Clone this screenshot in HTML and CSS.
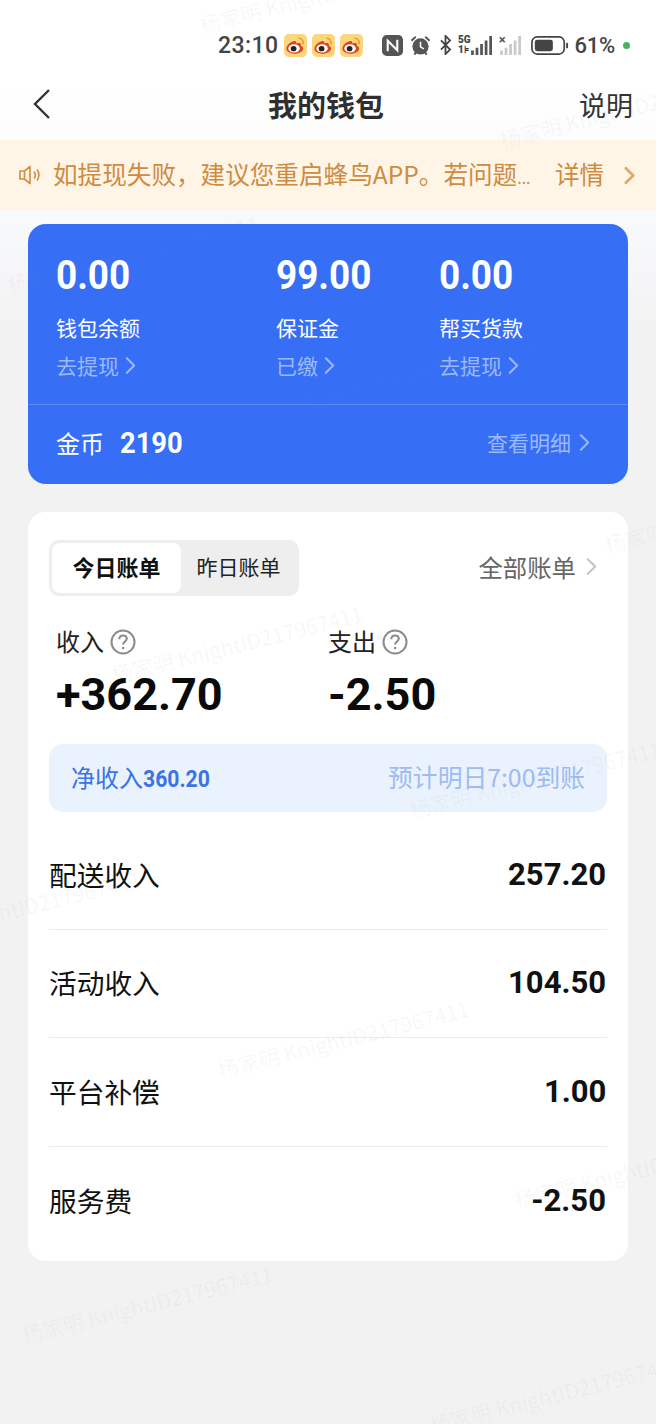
FILE: index.html
```html
<!DOCTYPE html>
<html lang="zh-CN">
<head>
  <meta charset="UTF-8" />
  <meta name="viewport" content="width=device-width, initial-scale=1.0"/>
  <title>我的钱包</title>
  <link rel="stylesheet" href="styles.css">
</head>
<body>
  <svg class="defs" width="0" height="0">
    <symbol id="weibo" viewBox="0 0 24 24">
      <rect width="24" height="24" rx="5" fill="#fbd67c"/>
      <path d="M10 7.500c-4 1-7.500 4.500-7.500 8 0 3 4 5 8.500 5s9-2.500 9-5.500c0-2-2-2.500-2.500-3 .5-1.500 0-3-2.500-2.500l-2 .5c.2-2-1-3.300-3-2.500z" fill="#e2411f"/>
      <ellipse cx="10.500" cy="15" rx="6" ry="4.200" fill="#fff"/>
      <ellipse cx="10" cy="15.300" rx="3" ry="2.800" fill="#222"/>
      <path d="M15 4.500c3.500 0 5.500 2.500 5 6" fill="none" stroke="#ef9a2a" stroke-width="1.600"/>
    </symbol>
    <symbol id="chev" viewBox="0 0 12 20">
      <path d="M2 2l8 8-8 8" fill="none" stroke="currentColor" stroke-linecap="round" stroke-linejoin="round"/>
    </symbol>
    <symbol id="help" viewBox="0 0 26 26">
      <circle cx="13" cy="13" r="11.500" fill="none" stroke="#8a8a8a" stroke-width="2"/>
      <path d="M9.300 10.200c0-2.300 1.700-3.700 3.800-3.700s3.700 1.400 3.700 3.300c0 2.600-3.700 2.800-3.700 5.600" fill="none" stroke="#8a8a8a" stroke-width="2"/>
      <circle cx="13.100" cy="19" r="1.300" fill="#8a8a8a"/>
    </symbol>
    <symbol id="bars" viewBox="0 0 24 22">
      <path d="M0 17h3v5H0zM5 14h3v8H5zM10 10h3v12h-3zM15 6h3v16h-3zM20 1h3v21h-3z"/>
    </symbol>
  </svg>

  <div class="status-bar">
    <span class="clock">23:10</span>
    <svg class="app-icon"><use href="#weibo"/></svg>
    <svg class="app-icon"><use href="#weibo"/></svg>
    <svg class="app-icon"><use href="#weibo"/></svg>
    <svg class="nfc" viewBox="0 0 22 22">
      <rect width="22" height="22" rx="5" fill="#555"/>
      <path d="M6 17V6l10 10V5" fill="none" stroke="#fff" stroke-width="2.200"/>
    </svg>
    <svg class="alarm" viewBox="0 0 22 22">
      <circle cx="11" cy="12" r="8.500" fill="#555"/>
      <path d="M1.500 6L6 1.800M20.500 6L16 1.800M4.500 20.500l2-2.500M17.500 20.500l-2-2.500" stroke="#555" stroke-width="2"/>
      <path d="M11 7v5.500l3.500 2" fill="none" stroke="#fff" stroke-width="1.600"/>
    </svg>
    <svg class="bluetooth" viewBox="0 0 14 22">
      <path d="M2 6l10 10-5 5V1l5 5L2 16" fill="none" stroke="#444" stroke-width="2"/>
    </svg>
    <span class="signal">
      <span class="signal-tag"><b>5G</b><b>1⊧</b></span>
      <svg class="bars"><use href="#bars"/></svg>
    </span>
    <span class="signal muted">
      <span class="signal-x">×</span>
      <svg class="bars"><use href="#bars"/></svg>
    </span>
    <svg class="battery" viewBox="0 0 40 20">
      <rect x="1" y="1" width="34" height="18" rx="5.500" fill="none" stroke="#444" stroke-width="1.800"/>
      <rect x="4" y="4" width="19" height="12" rx="2.500" fill="#444"/>
      <rect x="37" y="7" width="2" height="6" rx="1" fill="#444"/>
    </svg>
    <span class="percent">61%</span>
    <span class="dot"></span>
  </div>

  <div class="nav-bar">
    <svg class="back" viewBox="0 0 18 32"><path d="M16 2L2 16l14 14" fill="none" stroke="#333" stroke-width="2.400"/></svg>
    <h1>我的钱包</h1>
    <span class="nav-link">说明</span>
  </div>

  <div class="notice">
    <svg class="speaker" viewBox="0 0 24 24">
      <path d="M2 8h4.500L12 3.500v17L6.500 16H2zM6.500 8v8" fill="none" stroke="#d2904a" stroke-width="1.700" stroke-linejoin="round"/>
      <path d="M16 8.500c1.500 2 1.500 5 0 7M19 6.500c2.500 3 2.500 8 0 11" fill="none" stroke="#d2904a" stroke-width="1.700"/>
    </svg>
    <span class="notice-text">如提现失败，建议您重启蜂鸟APP。若问题<span class="notice-dots">...</span></span>
    <span class="notice-more">详情</span>
    <svg class="chev notice-chev"><use href="#chev"/></svg>
  </div>

  <div class="content">
    <section class="wallet">
      <div class="wallet-cols">
        <div class="wallet-col">
          <div class="wallet-num">0.00</div>
          <div class="wallet-label">钱包余额</div>
          <div class="wallet-sub">去提现<svg class="chev"><use href="#chev"/></svg></div>
        </div>
        <div class="wallet-col">
          <div class="wallet-num">99.00</div>
          <div class="wallet-label">保证金</div>
          <div class="wallet-sub">已缴<svg class="chev"><use href="#chev"/></svg></div>
        </div>
        <div class="wallet-col">
          <div class="wallet-num">0.00</div>
          <div class="wallet-label">帮买货款</div>
          <div class="wallet-sub">去提现<svg class="chev"><use href="#chev"/></svg></div>
        </div>
      </div>
      <div class="wallet-foot">
        <span class="coin-label">金币</span>
        <span class="coin-num">2190</span>
        <span class="wallet-detail">查看明细<svg class="chev"><use href="#chev"/></svg></span>
      </div>
    </section>

    <section class="bill">
      <div class="bill-head">
        <div class="tabs">
          <span class="tab active">今日账单</span>
          <span class="tab">昨日账单</span>
        </div>
        <span class="all-bills">全部账单<svg class="chev"><use href="#chev"/></svg></span>
      </div>

      <div class="totals">
        <div class="total">
          <div class="total-label">收入<svg class="help"><use href="#help"/></svg></div>
          <div class="total-num">+362.70</div>
        </div>
        <div class="total">
          <div class="total-label">支出<svg class="help"><use href="#help"/></svg></div>
          <div class="total-num">-2.50</div>
        </div>
      </div>

      <div class="net">
        <span class="net-income">净收入<b>360.20</b></span>
        <span class="net-eta">预计明日7:00到账</span>
      </div>

      <div class="rows">
        <div class="row"><span>配送收入</span><b>257.20</b></div>
        <div class="row"><span>活动收入</span><b>104.50</b></div>
        <div class="row"><span>平台补偿</span><b>1.00</b></div>
        <div class="row"><span>服务费</span><b>-2.50</b></div>
      </div>
    </section>
  </div>

  <div class="watermarks">
    <span class="wm w1">杨家明 KnightID217967411</span>
    <span class="wm w2">杨家明 KnightID217967411</span>
    <span class="wm w3">杨家明 KnightID217967411</span>
    <span class="wm w4">杨家明 KnightID217967411</span>
    <span class="wm w5">杨家明 KnightID217967411</span>
    <span class="wm w6">杨家明 KnightID217967411</span>
    <span class="wm w7">杨家明 KnightID217967411</span>
    <span class="wm w8">杨家明 KnightID217967411</span>
    <span class="wm w9">杨家明 KnightID217967411</span>
    <span class="wm w10">杨家明 KnightID217967411</span>
    <span class="wm w11">杨家明 KnightID217967411</span>
    <span class="wm w12">杨家明 KnightID217967411</span>
  </div>
</body>
</html>
```

FILE: styles.css
```css
* {
  box-sizing: border-box;
}

html, body {
  margin: 0;
  padding: 0;
}

body {
  position: relative;
  width: 656px;
  height: 1424px;
  overflow: hidden;
  font-family: "Noto Sans CJK SC", "Noto Sans", sans-serif;
  background: linear-gradient(to bottom, #ffffff 0, #ffffff 80px, #f8f9fb 220px, #f2f2f3 330px, #f2f2f2 100%);
  color: #111;
}

.defs {
  position: absolute;
}

.chev {
  width: 11px;
  height: 19px;
  flex: none;
  stroke-width: 2.2;
}

/* status bar */
.status-bar {
  height: 72px;
  padding: 18px 0 0 218px;
  display: flex;
  align-items: center;
  color: #444;
}

.clock {
  font: 500 23px Roboto, sans-serif;
  letter-spacing: 0.4px;
  width: 66px;
}

.app-icon {
  width: 23px;
  height: 23px;
  margin-right: 5px;
}

.nfc {
  width: 21px;
  height: 21px;
  margin-left: 14px;
}

.alarm {
  width: 21px;
  height: 21px;
  margin-left: 7px;
}

.bluetooth {
  width: 15px;
  height: 20px;
  margin-left: 7px;
}

.signal {
  display: flex;
  align-items: flex-end;
  margin-left: 5px;
  fill: #555;
}

.signal-tag {
  display: flex;
  flex-direction: column;
  font: 700 10px/10px Roboto, sans-serif;
  color: #444;
}

.signal-tag b {
  display: block;
}

.signal-x {
  font: 700 13px/10px Roboto, sans-serif;
  color: #555;
  align-self: flex-start;
}

.bars {
  width: 22px;
  height: 20px;
  margin-left: 0;
}

.signal.muted {
  margin-left: 6px;
  fill: #c9c9c9;
}

.signal.muted .bars {
  margin-left: -6px;
}

.battery {
  width: 38px;
  height: 19px;
  margin-left: 9px;
}

.percent {
  font: 500 22px Roboto, sans-serif;
  letter-spacing: -0.3px;
  margin-left: 6px;
}

.dot {
  width: 7px;
  height: 7px;
  border-radius: 50%;
  background: #4caf63;
  margin-left: 8px;
}

/* nav */
.nav-bar {
  height: 68px;
  padding: 0 23px 4px 33px;
  display: flex;
  align-items: center;
  justify-content: space-between;
}

.back {
  width: 18px;
  height: 32px;
}

.nav-bar h1 {
  margin: 0 0 0 22px;
  font-size: 29px;
  font-weight: 700;
  color: #2f2f2f;
}

.nav-link {
  font-size: 27px;
  color: #333;
}

/* notice */
.notice {
  height: 70px;
  padding: 0 20px 0 18px;
  display: flex;
  align-items: center;
  background: #fff5e6;
  color: #cf8b3f;
  font-size: 24.6px;
}

.speaker {
  width: 24px;
  height: 24px;
  flex: none;
}

.notice-text {
  margin: 0 0 4px 11px;
  width: 502px;
  white-space: nowrap;
}

.notice-dots {
  font-size: 16px;
}

.notice-more {
  margin-bottom: 4px;
}

.notice-chev {
  margin-left: 20px;
  color: #e0a868;
  stroke-width: 3;
}

.content {
  padding: 14px 28px 0;
}

/* blue wallet card */
.wallet {
  height: 260px;
  border-radius: 18px;
  background: #366ff6;
  color: #fff;
}

.wallet-cols {
  height: 181px;
  padding: 26px 0 0 28px;
  display: grid;
  grid-template-columns: 220px 163px 1fr;
  border-bottom: 1px solid #5a8af9;
}

.wallet-num {
  font: 700 41px/50px Roboto, sans-serif;
  transform: scaleX(0.9);
  transform-origin: left center;
}

.wallet-label {
  margin-top: 12px;
  font-size: 21px;
  line-height: 30px;
}

.wallet-sub {
  margin-top: 8px;
  font-size: 21px;
  line-height: 30px;
  color: #9bb9fb;
  display: flex;
  align-items: center;
  gap: 6px;
}

.wallet-foot {
  height: 78px;
  padding: 0 38px 4px 28px;
  display: flex;
  align-items: center;
}

.coin-label {
  font-size: 24px;
}

.coin-num {
  margin-left: 16px;
  font: 700 30px Roboto, sans-serif;
  transform: scaleX(0.91);
  transform-origin: left center;
}

.wallet-detail {
  margin-left: auto;
  font-size: 21px;
  color: #9bb9fb;
  display: flex;
  align-items: center;
  gap: 8px;
}

/* white bill card */
.bill {
  margin-top: 28px;
  height: 749px;
  padding: 28px 21px 0;
  border-radius: 18px;
  background: #fff;
}

.bill-head {
  display: flex;
  align-items: center;
  justify-content: space-between;
}

.tabs {
  width: 250px;
  height: 56px;
  padding: 3px;
  display: flex;
  align-items: center;
  border-radius: 10px;
  background: #eeeeef;
}

.tab {
  width: 129px;
  height: 50px;
  line-height: 46px;
  text-align: center;
  font-size: 21px;
  color: #222;
  border-radius: 8px;
}

.tab + .tab {
  width: 115px;
}

.tab.active {
  background: #fff;
  font-size: 22px;
  font-weight: 700;
  color: #111;
}

.all-bills {
  margin: 0 10px 4px 0;
  font-size: 24.4px;
  color: #666;
  display: flex;
  align-items: center;
  gap: 10px;
}

.all-bills .chev {
  color: #c4c4c4;
}

.totals {
  margin-top: 25px;
  padding-left: 7px;
  display: grid;
  grid-template-columns: 272px 1fr;
}

.total-label {
  height: 38px;
  display: flex;
  align-items: center;
  gap: 6px;
  font-size: 24px;
  color: #222;
}

.help {
  width: 26px;
  height: 26px;
  margin-top: 3px;
}

.total-num {
  margin-top: 6px;
  font: 700 45px/60px Roboto, sans-serif;
  color: #0a0a0a;
}

.net {
  margin-top: 19px;
  height: 68px;
  padding: 0 22px 4px;
  display: flex;
  align-items: center;
  justify-content: space-between;
  border-radius: 14px;
  background: #eaf3fd;
}

.net-income {
  font-size: 24px;
  color: #3a72e8;
}

.net-income b {
  display: inline-block;
  font: 700 23px Roboto, sans-serif;
  transform: scaleX(0.92);
  transform-origin: left center;
}

.net-eta {
  font-size: 24.8px;
  color: #9ebcf1;
}

.rows {
  margin-top: 9px;
}

.row {
  height: 108.6px;
  display: flex;
  align-items: center;
  justify-content: space-between;
  font-size: 27.7px;
  color: #111;
  border-bottom: 1px solid #ebebeb;
}

.row span {
  margin-bottom: 2px;
}

.row:last-child {
  border-bottom: none;
}

.row b {
  margin: 0 1px 2px 0;
  font: 700 32px Roboto, sans-serif;
  transform: scaleX(0.97);
  transform-origin: right center;
}

/* watermark sits over everything */
.watermarks {
  position: absolute;
  inset: 0;
  pointer-events: none;
}

.wm {
  position: absolute;
  font-size: 21px;
  white-space: nowrap;
  color: rgba(120, 120, 120, 0.06);
  transform: rotate(-14deg);
  transform-origin: left center;
}

.w1 { left: 200px; top: 10px; }
.w2 { left: 500px; top: 125px; }
.w3 { left: 8px; top: 270px; }
.w4 { left: 305px; top: 385px; }
.w5 { left: 112px; top: 660px; }
.w6 { left: 410px; top: 795px; }
.w7 { left: -110px; top: 925px; }
.w8 { left: 218px; top: 1055px; }
.w9 { left: 515px; top: 1185px; }
.w10 { left: 22px; top: 1320px; }
.w11 { left: 430px; top: 1410px; }
.w12 { left: 605px; top: 530px; }
```
